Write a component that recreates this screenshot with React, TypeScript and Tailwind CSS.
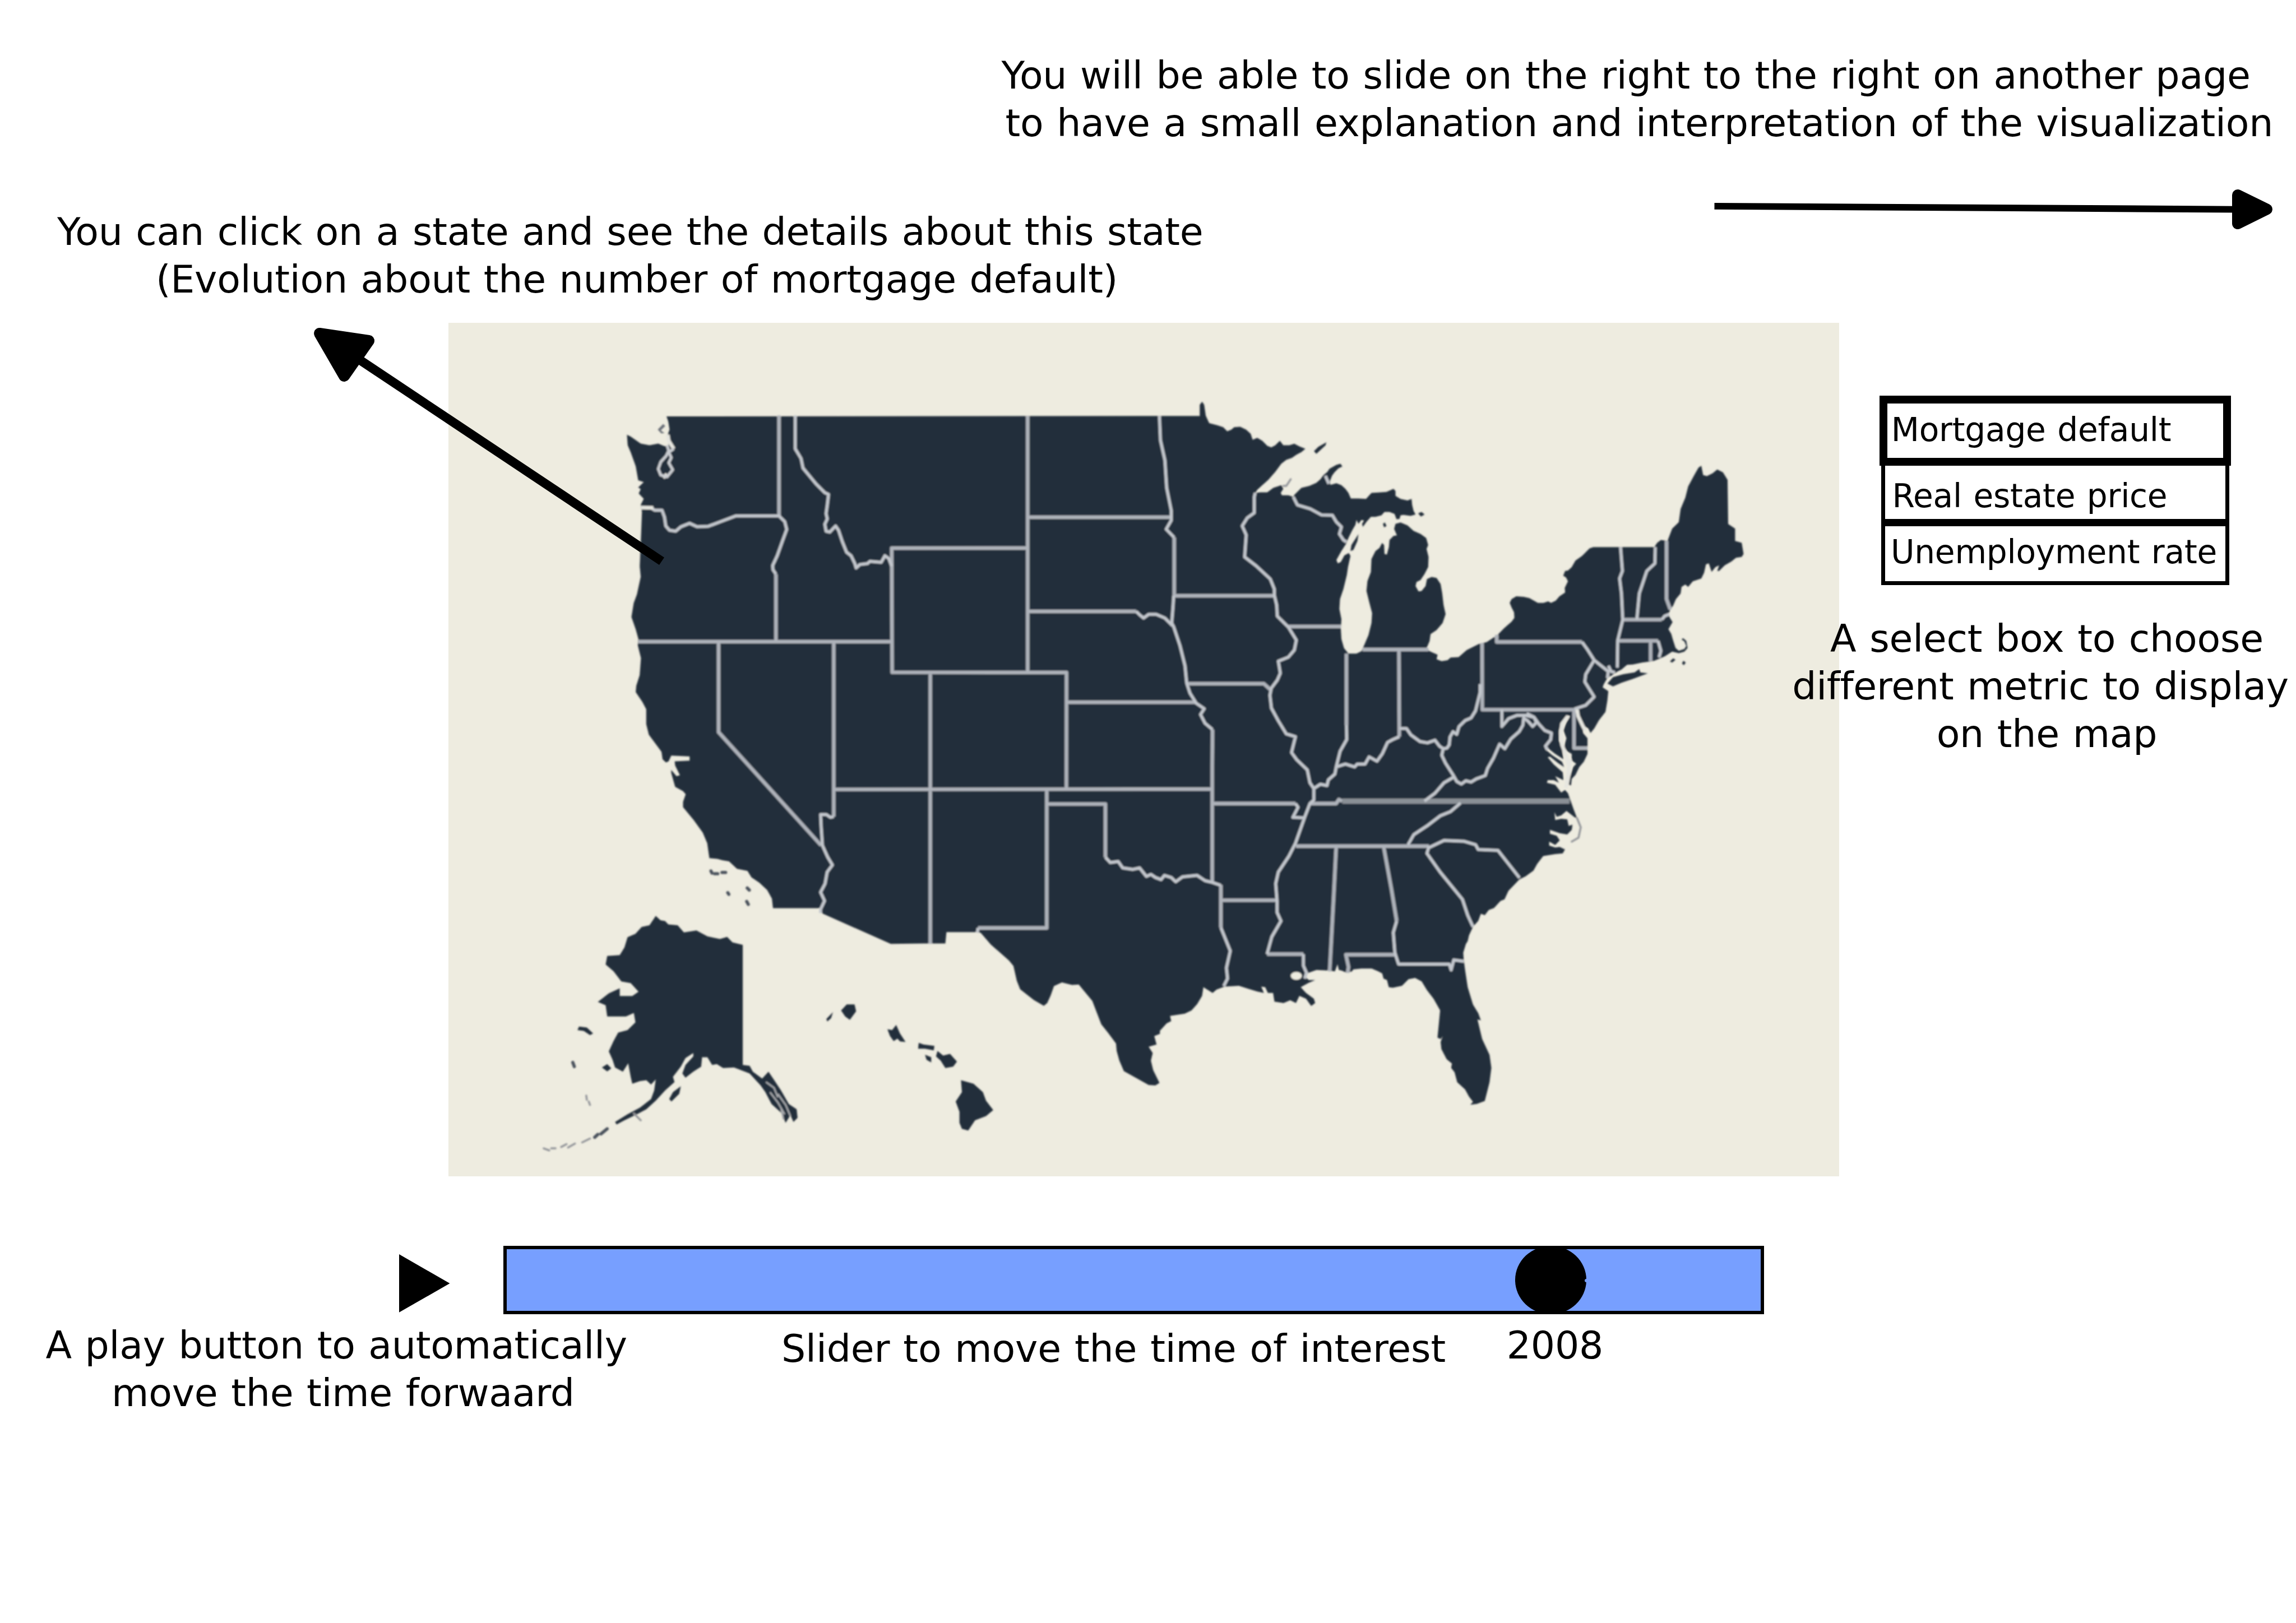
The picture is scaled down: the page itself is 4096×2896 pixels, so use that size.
import React from "react";

/* Survey sheets: origin and step of each local grid the map is digitised on. */
type Sheet = [number, number, number, number];
const NW: Sheet = [1350, 1000, 0.63776, 0.44643];
const PL: Sheet = [2350, 1000, 0.63776, 0.63776];
const GL: Sheet = [3050, 1000, 0.5102, 0.5102];
const NE: Sheet = [3750, 1100, 0.47832, 0.47832];
const SW: Sheet = [1350, 1600, 0.66964, 0.54209];
const SE: Sheet = [3050, 1700, 0.66964, 0.73342];
const AK: Sheet = [1350, 2300, 0.79719, 0.43367];
const TX: Sheet = [2350, 1950, 0.57398, 0.54209];
const VA: Sheet = [3500, 1700, 0.38265, 0.33333];

const on = ([ox, oy, sx, sy]: Sheet, pts: string) =>
  pts
    .trim()
    .split(/\s+/)
    .map((p) => {
      const [x, y] = p.split(",").map(Number);
      return `${(ox + x * sx).toFixed(1)},${(oy + y * sy).toFixed(1)}`;
    })
    .join(" ");
const line = (...parts: string[]) => "M" + parts.join(" L");
const area = (...parts: string[]) => line(...parts) + "Z";

const mainland = area(
  on(NW, "543,135"),
  on(PL, "1103,93"),
  on(
    GL,
    "8,118 8,60 20,45 30,60 38,115 55,152 95,162 125,172 145,192 165,185 180,172 210,170 240,185 262,205 272,235 295,225 320,240 345,265 365,273 385,262 408,240 425,262 455,262 480,255 505,268 535,280 515,297 490,310 468,325 440,335 415,355 385,395 350,435 320,462 295,485 285,500 310,497 345,497 375,475 415,462 425,480 412,500 418,512 450,512 475,520 480,510 515,475 555,465 590,450 610,432 625,412 645,395 655,380 690,360 710,355 720,368 700,378 680,398 668,415 658,440 660,460 690,452 715,462 735,480 750,500 762,528 800,528 838,530 865,500 900,498 940,495 975,480 985,490 985,515 1010,530 1045,538 1065,530 1068,560 1075,590 1085,608 1060,615 1025,610 1010,612 1005,630 990,632 980,605 955,595 930,595 915,612 885,620 862,620 840,645 822,670 818,655 828,638 815,635 800,655 790,635 785,660 770,685 750,725 738,755 715,790 690,835 697,852 712,845 730,812 752,800 760,815 748,870 742,910 725,980 708,1030 705,1080 715,1130 712,1180 715,1230 728,1275 750,1302 790,1302 815,1290 828,1262 850,1210 865,1150 868,1100 855,1050 840,990 845,940 862,895 865,830 885,790 905,775 918,750 928,760 930,805 942,808 952,770 955,735 975,715 992,712 978,680 985,655 1010,648 1045,662 1075,690 1110,705 1138,725 1148,760 1140,780 1150,820 1148,870 1130,905 1110,935 1090,945 1085,965 1100,992 1115,990 1135,965 1142,930 1165,920 1190,925 1210,955 1218,1000 1225,1060 1235,1105 1220,1150 1190,1185 1160,1205 1155,1240 1140,1275 1155,1290 1195,1308 1190,1330 1215,1340 1245,1335 1260,1322 1300,1320 1340,1285 1400,1255 1440,1245 1475,1222",
  ),
  on(
    NE,
    "126,1085 165,1045 205,1010 220,990 218,960 205,935 195,910 205,890 230,875 270,878 300,885 345,910 375,910 400,902 415,910 440,898 460,875 490,855 488,830 505,795 495,775 480,765 490,740 505,738 525,720 545,685 580,660 620,620 640,613 965,613 980,590 1000,575 1035,580 1060,515 1095,480 1105,410 1130,350 1145,290 1180,225 1200,190 1215,180 1225,230 1245,235 1275,220 1300,200 1330,215 1355,255 1358,490 1395,515 1395,580 1430,590 1440,650 1430,665 1400,670 1375,690 1340,710 1310,740 1300,740 1310,710 1290,720 1270,745 1255,700 1240,705 1230,750 1215,780 1170,795 1145,825 1130,812 1110,825 1105,860 1080,890 1065,925 1050,945 1040,970 1048,990 1062,1012 1040,1050 1055,1075 1065,1110 1078,1150 1095,1165 1125,1155 1135,1140 1125,1115 1110,1105 1118,1098 1135,1112 1142,1150 1125,1170 1095,1178 1060,1170 1020,1195 965,1218 945,1222 900,1228 850,1238 820,1240 790,1265 770,1275 740,1295 715,1310 695,1345 690,1360 720,1380 715,1430 705,1490 670,1535",
  ),
  on(
    VA,
    "1460,465 1435,500 1420,465 1395,450 1375,400 1350,350 1360,390 1385,470 1385,500 1415,540 1415,600 1415,660 1390,720 1360,760 1335,820 1310,850 1305,900 1290,895 1300,830 1320,760 1340,735 1310,710 1310,660 1280,640 1260,610 1265,580 1275,540 1255,480 1275,420 1300,370 1285,365 1240,420 1225,480 1225,560 1245,610 1250,665 1255,700 1200,660 1150,615 1130,620 1180,670 1245,720 1260,760 1220,730 1165,680 1150,685 1190,740 1250,800 1255,860 1200,830 1225,880 1190,860 1150,860 1145,880 1200,895 1240,955 1265,935 1285,960 1300,1010 1325,1090 1345,1150 1330,1145 1275,1095 1240,1130 1210,1140 1195,1105 1200,1165 1240,1155 1280,1160 1290,1210 1315,1200 1310,1240 1280,1275 1230,1265 1165,1240 1165,1270 1210,1285 1230,1320 1200,1355 1160,1330 1160,1360 1200,1375 1230,1370 1265,1390 1250,1420 1200,1425 1120,1440 1080,1500",
  ),
  on(
    SE,
    "1275,705 1245,725 1222,735 1180,775 1165,805 1150,810 1125,835 1105,842 1090,860 1075,855 1065,880 1045,900 1030,930 1025,950 1018,960 1008,990 1010,1015 1015,1050 1025,1110 1045,1170 1065,1200 1075,1225 1062,1222 1080,1290 1108,1345 1115,1390 1108,1440 1090,1505 1060,1515 1035,1518 1045,1508 1030,1490 1015,1465 985,1440 975,1405 962,1390 965,1375 945,1360 925,1325 922,1300 930,1280 922,1290 910,1285 915,1240 920,1190 895,1150 870,1120 850,1090 825,1078 800,1082 775,1105 740,1112 725,1110 718,1085 705,1080 700,1062 685,1055 660,1045 620,1045 590,1048 585,1055 565,1060 545,1052 535,1050 530,1030 520,1055 495,1052 450,1050 420,1060 405,1070 420,1085 445,1085 420,1095 390,1110 410,1130 440,1150 445,1165 430,1175 410,1150 385,1140 372,1165 350,1155 325,1165 290,1160 285,1130 265,1130 255,1110 240,1108 250,1130 225,1125 190,1115 155,1105 100,1108 70,1118 55,1130 20,1110 15,1140",
  ),
  on(
    TX,
    "1215,1120 1190,1150 1160,1165 1095,1175 1100,1200 1080,1210 1050,1245 1050,1260 1025,1270 1035,1310 1000,1320 1018,1350 1010,1385 1020,1430 1048,1490 1030,1502 1000,1500 950,1470 890,1435 870,1385 858,1340 855,1305 820,1255 790,1215 770,1160 750,1105 715,1060 690,1028 660,1030 615,1018 580,1035 565,1080 550,1115 535,1128 490,1100 430,1050 415,1010 400,940 380,915 300,840 255,785 240,782 103,782 98,835 0,835",
  ),
  on(
    SW,
    "1370,1483 1110,1340 1100,1315 922,1315 918,1270 900,1230 870,1195 840,1170 825,1140 785,1130 755,1095 730,1090 710,1083 680,1080 672,1010 655,960 620,900 580,840 580,815 590,780 580,765 550,745 535,680 535,665 555,695 568,690 550,645 548,625 605,622 605,602 535,598 525,625 515,630 502,615 498,580 480,550 450,500 440,450 440,380 425,345 400,300 402,270 415,220 420,140 408,80 410,50",
  ),
  on(
    NW,
    "420,1350 403,1280 412,1200 425,1150 440,1050 436,990 440,860 445,680 440,640 452,605 432,575 440,550 430,540 452,510 430,500 420,420 400,340 388,300 385,240 400,250 440,290 475,300 510,290 535,305 552,300 545,250 555,210 550,165",
  ),
);

const landmass = [
  mainland,
  // Alaska
  area(
    on(
      AK,
      "400,75 415,100 430,105 440,125 470,130 490,172 530,160 565,195 605,210 628,198 645,230 678,245 678,950 700,955 710,990 740,1030 760,990 775,1030 800,1100 825,1180 850,1210 853,1260 840,1285 830,1245 815,1290 800,1230 770,1180 750,1110 735,1070 700,1000 685,990 650,965 615,968 595,945 580,950 565,905 548,905 545,960 520,990 495,1025 485,1000 495,950 520,900 520,880 495,910 480,960 455,1020 460,1050 430,1100 400,1160 370,1210 340,1240 300,1275 275,1300 270,1285 310,1240 350,1200 385,1150 395,1100 400,1035 385,1065 370,1040 350,1045 325,1060 320,1020 312,940 295,990 270,965 262,920 250,870 265,810 280,760 310,745 335,700 330,645 305,665 245,665 240,600 215,580 250,530 285,500 285,545 325,545 345,520 320,470 290,460 265,400 240,360 245,310 285,305 300,260 310,200 335,180 355,140 380,130",
    ),
  ),
  area(on(AK, "443,1150 455,1110 480,1075 475,1120 450,1165")),
  area(on(AK, "150,745 155,725 180,730 200,765 190,775 170,750")),
  area(on(AK, "228,965 245,945 258,970 245,988")),
  // Hawaii
  area(on(AK, "992,630 1010,595 1035,595 1040,635 1020,685 1005,665")),
  area(on(AK, "966,640 960,675 948,695 945,680")),
  area(on(AK, "1140,740 1155,745 1168,715 1180,765 1198,815 1180,812 1172,795 1160,810 1148,780")),
  area(on(AK, "1240,820 1255,830 1290,838 1288,865 1260,855 1238,855")),
  area(on(AK, "1260,890 1280,905 1280,935 1265,920")),
  area(on(AK, "1300,868 1318,895 1340,885 1362,930 1350,960 1325,968 1310,925 1295,900")),
  area(on(AK, "1375,1040 1415,1060 1445,1110 1455,1160 1478,1215 1455,1250 1420,1275 1398,1335 1378,1325 1370,1290 1370,1225 1358,1165 1378,1110")),
  // Long Island and the cape islands
  area(on(NE, "715,1340 745,1305 800,1290 860,1280 885,1262 890,1280 930,1285 850,1315 790,1335 745,1355")),
  area(on(NE, "1048,1222 1065,1205 1078,1213 1060,1228")),
  area(on(NE, "1112,1232 1120,1218 1132,1228 1122,1242")),
  // Great Lakes islands
  area(on(GL, "578,292 600,270 640,248 636,262 590,305")),
  area(on(GL, "760,790 765,760 800,706 795,740 775,785")),
  area(on(GL, "1098,602 1115,595 1130,608 1112,618")),
  area(on(GL, "922,655 932,648 940,665 928,672")),
].join("");

const islets = [
  line(on(SW, "700,1153 712,1153")),
  line(on(SW, "728,1147 742,1147")),
  line(on(SW, "824,1220 832,1230")),
  line(on(SW, "822,1283 828,1297")),
  line(on(SW, "750,1242 754,1250")),
  line(on(SW, "686,1140 690,1150")),
  line(on(AK, "205,1375 215,1358")),
  line(on(AK, "225,1355 245,1325")),
  line(on(AK, "135,935 140,960")),
].join("");

const faintIslets = [
  line(on(AK, "165,1405 190,1382")),
  line(on(AK, "98,1432 115,1415")),
  line(on(AK, "120,1435 142,1412")),
  line(on(AK, "42,1440 60,1452")),
  line(on(AK, "66,1440 80,1440")),
  line(on(AK, "178,1130 180,1155")),
  line(on(AK, "186,1165 190,1185")),
  line(on(AK, "330,1235 352,1275")),
  line(on(VA, "1345,1150 1370,1220 1355,1300 1310,1330")),
  line(on(GL, "425,465 440,465 462,432")),
].join("");

/* Straight survey borders. */
const straight = [
  line(on(NW, "992,130 992,703")),
  line(on(NW, "430,1420 1442,1420")),
  line(on(NW, "980,1035 980,1420")),
  line(on(PL, "415,620"), on(NW, "1442,887"), on(SW, "1375,207"), on(PL, "572,1117"), on(TX, "635,110")),
  line(on(SW, "715,68 715,488 1105,1020")),
  line(on(SW, "1153,68 1153,885")),
  line(on(SW, "1520,207 1520,1483")),
  line(on(SW, "1155,757"), on(TX, "1282,110")),
  line(on(PL, "417,93 417,1117")),
  line(on(PL, "417,497 990,497")),
  line(on(PL, "417,873 850,873")),
  line(on(PL, "572,1236 1085,1236")),
  line(on(PL, "1002,578 1002,811 1402,811")),
  line(on(PL, "1055,1162 1360,1162 1385,1185")),
  line(on(PL, "1155,1345"), on(TX, "1282,0 1282,545")),
  line(on(GL, "450,1167 712,1167")),
  line(on(GL, "740,1302"), on(SE, "564,200")),
  line(on(GL, "820,1282 1150,1282")),
  line(on(GL, "1002,1282"), on(SE, "765,240")),
  line(on(GL, "1417,1250"), on(VA, "715,322 1325,322 1325,615 1415,615")),
  line(on(SE, "425,472 525,472 535,458 548,464")),
  line(on(SE, "372,620 878,620")),
  line(on(SE, "52,472 370,472")),
  line(on(SE, "85,808 300,808")),
  line(on(TX, "548,110 548,762 243,762")),
  line(on(TX, "548,180 808,180 808,430")),
  line(on(TX, "1320,560 1320,760")),
  line(on(SE, "525,620 515,800 500,1055")),
  line(on(SE, "705,620 735,770 755,880")),
  line(on(SE, "748,997 562,997 572,1040 568,1060")),
  line(on(SE, "262,995 400,995")),
  line(on(NE, "126,1080 126,1118 580,1118")),
  line(on(NE, "797,999 1005,999")),
  line(on(NE, "1030,580 1030,890 1050,945")),
  line(on(NE, "770,1112 985,1112")),
  line(on(NE, "945,1112 945,1220")),
].join("");

/* Borders that follow rivers and ridges. */
const winding = [
  line(on(NW, "440,655 480,655 495,670 525,670 535,710 540,760 555,785 580,790 600,765 635,745 665,765 710,762 760,735 820,703 992,703 1015,735 1023,780 1005,850 985,930 967,985 968,1010 980,1035")),
  line(on(NW, "1057,130 1057,320 1080,375 1088,430 1140,520 1175,570 1190,580 1185,640 1180,690 1185,720 1175,750 1180,790 1195,795 1218,760 1230,785 1245,850 1262,910 1280,930 1295,975 1300,1000 1315,980 1345,975 1355,962 1400,968 1415,930 1430,945 1442,990")),
  line(on(SW, "1153,885 1140,888 1125,875 1103,875 1105,930 1110,1020 1130,1075 1148,1112 1128,1145 1120,1200 1103,1240 1118,1280 1103,1320 1103,1338")),
  line(on(PL, "850,873 865,888 880,900 900,885 930,885 965,900 995,930")),
  line(on(PL, "943,93 947,190 965,270 972,380 990,470 990,510 970,545 1002,578")),
  line(on(PL, "1000,811 997,860 992,920 1000,935 1025,1010 1045,1090 1052,1160 1065,1200 1090,1240 1122,1262 1107,1285 1125,1320 1155,1345")),
  line(
    on(GL, "285,500 280,520 280,600 245,625 220,665 240,710 232,820 290,865 360,930 380,980 380,1010 392,1060 395,1115 450,1170 490,1235 480,1285 450,1320 400,1340 410,1400 395,1435 365,1475 358,1510 365,1568"),
    on(SE, "278,140 305,185 335,230 370,240 355,295 375,320 415,355 425,400 440,420 440,460 425,472 405,520 370,610 345,655 305,710 295,750 300,810 300,850 315,880 280,935 262,995"),
  ),
  line(on(GL, "475,520 495,560 560,580 615,610 670,612 690,645 715,670 705,705 725,735 740,745")),
  line(on(GL, "635,415 652,455")),
  line(on(SE, "564,200 565,250 540,290 525,345 520,370 495,390 490,410 465,405 440,420")),
  line(on(SE, "765,240 740,250 720,260 700,300 680,325 650,310 635,335 605,335 595,345 560,335 525,345")),
  line(on(VA, "165,465 210,465 240,515 300,565 350,575 400,555 430,600 455,620 480,615 495,590 500,530 520,490 545,510 560,450 600,405 640,385 670,330 685,260 700,190 700,125")),
  line(on(VA, "455,620 445,670 470,730 520,820 545,870 575,890 605,865 640,875 675,850 735,825 750,770 790,690 830,585 865,620 905,545 960,490 985,440 990,385 1020,410 1050,450 1075,420 1060,380 1010,350")),
  line(on(VA, "520,840 460,880 400,960 330,1020")),
  line(on(VA, "845,322 845,450 890,390 945,365 1000,365 1060,380 1090,430 1130,480 1175,500 1170,550 1135,600 1150,630")),
  line(on(SE, "370,472 380,485 360,520 405,522")),
  line(on(SE, "400,995 400,1035 412,1060 405,1080")),
  line(on(TX, "243,762 240,785")),
  line(on(TX, "808,430 830,455 865,450 885,480 930,487 960,480 990,520 1010,510 1030,525 1055,535 1070,515 1100,525 1120,545 1150,522 1215,515 1250,540 1282,548 1320,562")),
  line(on(TX, "1320,760 1362,870 1345,950 1350,1000 1333,1035")),
  line(on(SE, "755,880 742,920 748,990 762,1030 955,1030 962,1050 972,1015 1010,1020")),
  line(on(SE, "878,620 870,645 920,710 1005,805 1025,860 1045,900")),
  line(on(SE, "878,625 935,600 1010,603 1055,615 1065,632 1140,635 1222,730")),
  line(on(SE, "798,615 820,580 870,550 920,515 960,500 998,470")),
  line(on(NE, "580,1118 610,1160 645,1215 600,1290 595,1330 645,1410 600,1455 540,1475")),
  line(on(NE, "645,1215 720,1275 715,1310")),
  line(on(NE, "785,613 795,740 780,780 790,860 797,1000 770,1110 768,1255")),
  line(on(NE, "970,613 968,700 925,740 885,860 872,998")),
  line(on(NE, "1005,999 1020,980 1045,970")),
  line(on(NE, "985,1112 1000,1165 990,1200")),
  line(on(NE, "720,1245 735,1275 755,1280")),
].join("");

/* Inlets and sounds, a little brighter than the borders. */
const inlets = [
  line(on(NW, "548,240 552,275 572,320")),
  line(on(NW, "530,485 545,465")),
  line(on(NW, "442,655 490,657")),
  line(on(VA, "1345,320 1352,370 1385,450 1400,480")),
  line(on(VA, "1285,370 1245,430 1238,500 1245,590 1275,680 1290,760 1275,900")),
  line(on(VA, "1300,700 1290,820 1270,920")),
].join("");

/* Puget Sound */
const sound = [
  line(on(NW, "572,320 552,340 562,370 552,400 568,440 545,480 520,470 510,435 520,395 542,360 552,330 545,300")),
].join("");

const channels = [
  line(on(AK, "752,1050 778,1085 790,1140")),
  line(on(AK, "765,1110 790,1170 812,1240")),
  line(on(AK, "790,1120 815,1185 830,1250")),
  line(on(AK, "800,1200 808,1270")),
].join("");

function StateMap() {
  return (
    <svg viewBox="1141 822 3541.2 2173.7" preserveAspectRatio="none" className="block h-full w-full">
      <defs>
        <filter id="soft" x="-2%" y="-2%" width="104%" height="104%">
          <feGaussianBlur stdDeviation="2.1" />
        </filter>
      </defs>
      <g filter="url(#soft)" fill="none" strokeLinejoin="round">
        <path d={landmass} fill="#242d3b" />
        <path d={area(on(NW, "508,210 530,178 538,190 520,215 535,230 522,232"))} fill="#6b7078" />
        <path d={islets} stroke="#4a515c" strokeWidth="8" strokeLinecap="round" />
        <path d={faintIslets} stroke="#93959a" strokeWidth="5" strokeLinecap="round" />
        <path d={straight} stroke="#aeb2ba" strokeWidth="9" />
        <path d={line(on(SE, "548,464 1412,464"))} stroke="#8a9096" strokeWidth="13" />
        <path d={winding} stroke="#c3c7cd" strokeWidth="7.5" />
        <path d={inlets} stroke="#e6e6e0" strokeWidth="9" />
        <path d={sound} stroke="#c9ccd0" strokeWidth="7" />
        <path d={channels} stroke="#a9abae" strokeWidth="4" />
        <ellipse cx="3300" cy="2485" rx="14" ry="10" fill="#eeece0" />
      </g>
    </svg>
  );
}

export default function App() {
  return (
    <div className="relative flex h-[2896px] w-[4096px] flex-col overflow-hidden bg-white font-['DejaVu_Sans',Verdana,sans-serif] text-[68.15px] leading-[85.2px] tracking-[-0.0035em] whitespace-nowrap text-black [word-spacing:0.034em]">
      <header className="h-[262px] pt-[92px] pl-[1761.5px]">
        <p className="w-[2302px] text-center tracking-[-0.0031em]">
          You will be able to slide on the right to the right on another page&nbsp;
          <br />
          &nbsp;to have a small explanation and interpretation of the visualization
        </p>
      </header>

      <section className="flex h-[314px] items-start justify-between">
        <p className="mt-[109px] ml-[36px] w-[2200px] text-center">
          You can click on a state and see the details about this state&nbsp;
          <br />
          (Evolution about the number of mortgage default)
        </p>
        <svg viewBox="0 0 1000 80" className="mt-[70.5px] mr-[38px] h-[80px] w-[1000px]">
          <path d="M0.5 34.8 L930 40.6" stroke="#000" strokeWidth="11.8" />
          <path d="M934 15 L986 40.4 L934 66 Z" strokeWidth="20" stroke="#000" strokeLinejoin="round" />
        </svg>
      </section>

      <main className="flex h-[1523px] items-start pl-[799.5px]">
        <div className="h-[1523px] w-[2481px] shrink-0 bg-[#eeece0]">
          <StateMap />
        </div>
        <aside className="relative -ml-[100px] w-[915.5px] shrink-0 pt-[130.3px]">
          <ul className="ml-[172.7px] w-[626.6px] text-[58.2px] leading-[72px]">
            <li className="h-[124.4px] border-[14px] border-black pt-[10.5px] pl-[6.5px]">Mortgage default</li>
            <li className="mx-[3.2px] h-[108px] border-x-[7px] border-b-[13px] border-black pt-[18px] pl-[12px]">
              Real estate price
            </li>
            <li className="mx-[3.2px] h-[105px] border-x-[7px] border-b-[7px] border-black pt-[10.2px] pl-[9.5px]">
              Unemployment rate
            </li>
          </ul>
          <p className="mt-[53.3px] ml-[26.5px] text-center">
            A select box to choose
            <span className="-ml-[23px] block">different metric to display</span>
            on the map
          </p>
        </aside>
      </main>

      <section className="mt-[124px] flex h-[122.3px] items-start">
        <svg viewBox="0 0 91 104" className="mt-[15.2px] ml-[711.5px] h-[104px] w-[91px]">
          <path d="M0 0 L90.4 52 L0 103.8 Z" />
        </svg>
        <div className="relative ml-[95.4px] h-[122.3px] w-[2249px] border-[6px] border-black bg-[#779fff]">
          <span className="absolute -top-[6px] left-[1799px] h-[122.3px] w-[127.6px] rounded-[50%] bg-black" />
          <span className="absolute top-[53px] left-[1923.5px] h-[6px] w-[4px] rounded-l-full bg-[#779fff]" />
        </div>
      </section>

      <section className="flex items-start pt-[12.3px]">
        <p className="w-[1224px] text-center">
          A play button to automatically&nbsp;
          <br />
          move the time forwaard
        </p>
        <p className="mt-[6px] ml-[170px] w-[1293.7px] tracking-[-0.002em]">Slider to move the time of interest</p>
        <p>2008</p>
      </section>

      {/* Callout arrow from the state to its note */}
      <svg viewBox="540 570 660 450" className="absolute top-[570px] left-[540px] h-[450px] w-[660px]">
        <path d="M1180.5 1001.4 L637 639" stroke="#000" strokeWidth="16.1" />
        <path d="M570 595 L658 608 L614 671 Z" stroke="#000" strokeWidth="20" strokeLinejoin="round" />
      </svg>
    </div>
  );
}
